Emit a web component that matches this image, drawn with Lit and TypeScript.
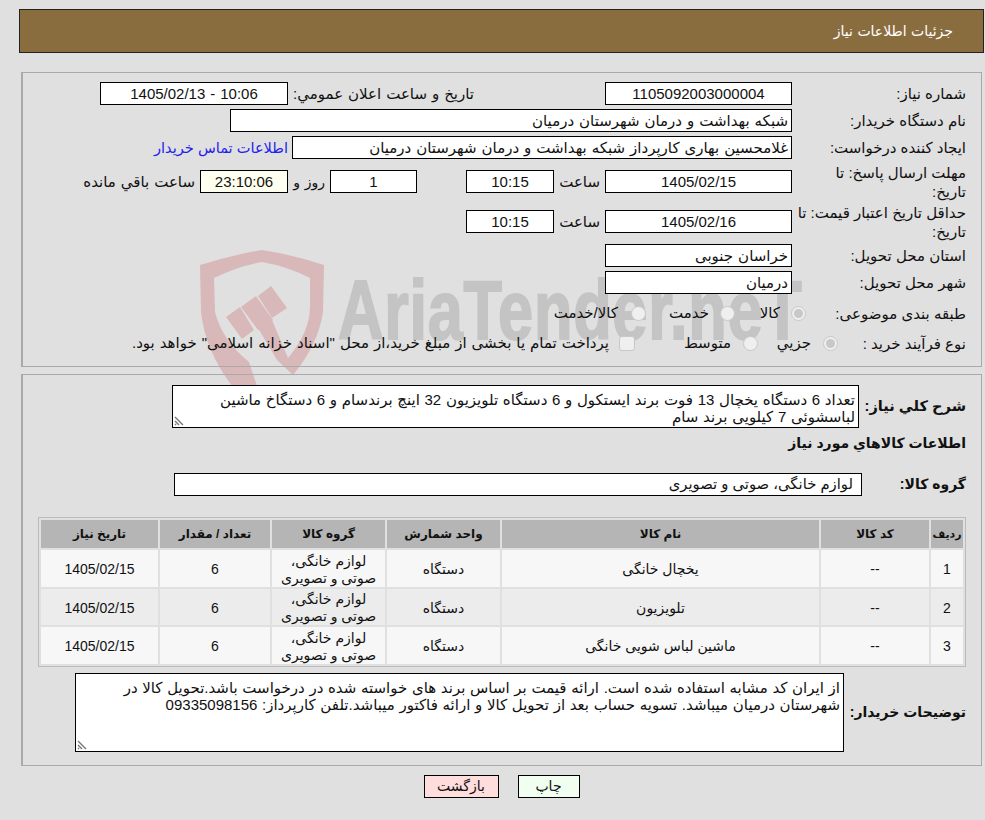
import { LitElement, html, css, svg } from "lit";
import { customElement } from "lit/decorators.js";

const rows = [
  { n: "1", name: "یخچال خانگی", h: "r37" },
  { n: "2", name: "تلویزیون", h: "r36" },
  { n: "3", name: "ماشین لباس شویی خانگی", h: "r37" },
];

const grip = svg`<svg class="grip" width="10" height="10" viewBox="0 0 10 10"><path d="M1 1l8 8M1 5l4 4M1 8l1 1" stroke="#777" stroke-width="1.4" fill="none"/></svg>`;

@customElement("app-root")
export class AppRoot extends LitElement {
  static styles = css`
    :host { display: block; width: 985px; height: 820px; background: #e0e0e0; position: relative; overflow: hidden;
      font-family: "Liberation Sans", "DejaVu Sans", sans-serif; font-size: 15px; color: #111; }
    .page { position: relative; direction: rtl; padding: 9px 1px 0 0; display: flex; flex-direction: column; }
    .mark { position: absolute; left: 0; top: 0; }
    .brand { position: absolute; left: 338px; top: 260px; font: bold 84px "Liberation Sans", sans-serif; color: #c4c4c4; -webkit-text-stroke: 2px #c4c4c4; direction: ltr; white-space: nowrap; transform-origin: 0 0; transform: scaleX(.75); letter-spacing: 1px; line-height: 100px; }
    .head { margin-left: 19px; height: 42px; border: 1px solid #222; background: #8a6d3f; color: #fff; font-size: 14px; font-family: "DejaVu Sans", sans-serif; display: flex; align-items: center; padding-right: 30px; }
    .panel { margin: 0 2px 0 21px; border: 1px solid #aaa; border-left-width: 2px; position: relative; }
    .p1 { margin-top: 19px; height: 284px; padding-top: 9px; display: flex; flex-direction: column; }
    .p2 { margin-top: 7px; height: 380px; padding-top: 10px; display: flex; flex-direction: column; }
    .row { display: flex; align-items: center; height: 23px; margin-bottom: 4px; flex: none; white-space: nowrap; }
    .lab { width: 174px; padding-right: 15px; line-height: 19px; flex: none; white-space: nowrap; }
    .f { height: 23px; box-sizing: border-box; border: 1px solid #000; background: #fff; text-align: center; line-height: 21px; flex: none; white-space: nowrap; overflow: hidden; word-spacing: .8px; }
    .w187 { width: 187px; } .w188 { width: 188px; } .w88 { width: 88px; } .w87 { width: 87px; }
    .start { text-align: right; padding-right: 3px; }
    .yellow { background: #fffff0; }
    .gap5 { margin-right: 5px; }
    .pad5 { padding-right: 5px; box-sizing: border-box; flex: none; word-spacing: .8px; }
    .sm { font-size: 14px; }
    .link { color: #2222ee; margin-right: 4px; font-size: 14.6px; }
    .r3 { margin-bottom: 11px; }
    .r4 { margin-bottom: 17px; }
    .r5 { margin-bottom: 11px; }
    .opt { height: 30px; margin: 0; }
    .rd { width: 15px; height: 15px; border-radius: 50%; border: 1px solid #c8c8c8; background: #efefef; box-sizing: border-box; flex: none; display: flex; align-items: center; justify-content: center; }
    .rd i { width: 9px; height: 9px; border-radius: 50%; background: #c8c8c8; display: none; }
    .rd.on i { display: block; }
    .ck { width: 16px; height: 15px; border-radius: 3px; border: 1px solid #c8c8c8; background: #efefef; box-sizing: border-box; flex: none; }
    .o { flex: none; word-spacing: .8px; }
    .b { font-weight: bold; font-size: 14px; }
    .b.big { font-size: 14.6px; }
    .ta { border: 1px solid #000; background: #fff; box-sizing: border-box; position: relative; line-height: 17px; padding: 5px 3px 0; flex: none; word-spacing: .5px; }
    .grip { position: absolute; left: 1px; bottom: 1px; }
    .desc { display: flex; align-items: center; }
    .desc .lab { width: 103px; margin-left: 4px; }
    .title { padding-right: 15px; margin: 4px 0 0; line-height: 22px; }
    .grp { display: flex; align-items: center; margin-top: 19px; }
    .grp .lab { width: 104px; }
    .grp .f { word-spacing: 0; font-size: 14.8px; }
    table { border: 1px solid #bbb; border-spacing: 2px; margin: 21px 15px 0 0; width: 928px; table-layout: fixed; border-collapse: separate; text-align: center; flex: none; }
    th { background: #b5b5b5; height: 28px; padding: 0; font-size: 12px; font-weight: bold; }
    th:first-child { font-size: 11px; }
    td { padding: 2px 0 0; line-height: 17px; font-size: 14px; box-sizing: border-box; }
    tr.r37 td { height: 37px; } tr.r36 td { height: 36px; }
    tr.a td { background: #f7f7f7; } tr.c td { background: #ececec; }
    .desc2 { margin-top: 6px; }
    .desc2 .lab { width: 118px; }
    .btns { display: flex; justify-content: center; margin-top: 9px; gap: 19px; padding-left: 19px; }
    .btn { height: 23px; box-sizing: border-box; border: 1px solid #000; line-height: 21px; text-align: center; font-size: 14px; }
    .print { width: 62px; background: #f0fff0; }
    .back { width: 75px; background: #ffdddd; }
  `;

  render() {
    return html`
      <svg class="mark" width="985" height="420" viewBox="0 0 985 420">
        <path fill="#d9b8ba" d="M200 265 Q232 255 262 250 Q294 255 324 265 L323 312 Q318 345 293 375 L277 360 L258 328 L272 320 L288 358 Q310 332 310 306 L310 278 Q286 266 262 262 Q238 266 214 278 L215 312 Q222 340 249 362 L257 386 L232 386 Q205 350 201 312 Z"/>
        <path fill="#d9b8ba" d="M226 317 240 307 254 330 242 339ZM241 307 256 296 273 320 258 330ZM258 296 271 286 287 308 272 318Z"/>
      </svg>
      <div class="brand" aria-hidden="true">AriaTender.neT</div>
      <div class="page">
        <div class="head">جزئیات اطلاعات نیاز</div>
        <section class="panel p1">
          <div class="row">
            <div class="lab">شماره نیاز:</div>
            <div class="f w187">1105092003000004</div>
            <div class="o" style="width:131px"></div>
            <div class="o" style="width:181px">تاریخ و ساعت اعلان عمومي:</div>
            <div class="f w188 gap5">10:06 - 1405/02/13</div>
          </div>
          <div class="row">
            <div class="lab">نام دستگاه خریدار:</div>
            <div class="f start" style="width:562px">شبکه بهداشت و درمان شهرستان درمیان</div>
          </div>
          <div class="row r3">
            <div class="lab">ایجاد کننده درخواست:</div>
            <div class="f start" style="width:500px">غلامحسین بهاری کارپرداز شبکه بهداشت و درمان شهرستان درمیان</div>
            <div class="link">اطلاعات تماس خریدار</div>
          </div>
          <div class="row r4">
            <div class="lab">مهلت ارسال پاسخ: تا<br>تاریخ:</div>
            <div class="f w187">1405/02/15</div>
            <div class="pad5" style="width:51px">ساعت</div>
            <div class="f w88">10:15</div>
            <div class="o" style="width:49px"></div>
            <div class="f w87">1</div>
            <div class="pad5 sm" style="width:42px">روز و</div>
            <div class="f w88 yellow">23:10:06</div>
            <div class="pad5">ساعت باقي مانده</div>
          </div>
          <div class="row r5">
            <div class="lab">حداقل تاریخ اعتبار قیمت: تا<br>تاریخ:</div>
            <div class="f w187">1405/02/16</div>
            <div class="pad5" style="width:51px">ساعت</div>
            <div class="f w88">10:15</div>
          </div>
          <div class="row">
            <div class="lab">استان محل تحویل:</div>
            <div class="f start w187">خراسان جنوبی</div>
          </div>
          <div class="row">
            <div class="lab">شهر محل تحویل:</div>
            <div class="f start w187">درمیان</div>
          </div>
          <div class="row opt">
            <div class="lab" style="width:160px">طبقه بندی موضوعی:</div>
            <span class="rd on"><i></i></span>
            <span class="o" style="margin-right:11px;width:45px">کالا</span>
            <span class="rd"><i></i></span>
            <span class="o" style="margin-right:11px;width:63px">خدمت</span>
            <span class="rd"><i></i></span>
            <span class="o" style="margin-right:13px">کالا/خدمت</span>
          </div>
          <div class="row opt">
            <div class="lab" style="width:128px">نوع فرآیند خرید :</div>
            <span class="rd on"><i></i></span>
            <span class="o" style="margin-right:12px;width:53px">جزيي</span>
            <span class="rd"><i></i></span>
            <span class="o" style="margin-right:12px;width:96px">متوسط</span>
            <span class="ck"></span>
            <span class="o" style="margin-right:10px">پرداخت تمام یا بخشی از مبلغ خرید،از محل "اسناد خزانه اسلامی" خواهد بود.</span>
          </div>
        </section>
        <section class="panel p2">
          <div class="desc">
            <div class="lab b big">شرح کلي نیاز:</div>
            <div class="ta" style="width:687px;height:43px;">تعداد 6 دستگاه یخچال 13 فوت برند ایستکول و 6 دستگاه تلویزیون 32 اینچ برندسام و 6 دستگاخ ماشین<br>لباسشوئی 7 کیلویی برند سام${grip}</div>
          </div>
          <div class="title b">اطلاعات کالاهاي مورد نیاز</div>
          <div class="grp">
            <div class="lab b">گروه کالا:</div>
            <div class="f start" style="width:688px;padding-right:8px;">لوازم خانگی، صوتی و تصویری</div>
          </div>
          <table>
            <colgroup><col style="width:32px"><col style="width:108px"><col style="width:317px"><col style="width:113px"><col style="width:113px"><col style="width:110px"><col style="width:117px"></colgroup>
            <thead><tr><th>ردیف</th><th>کد کالا</th><th>نام کالا</th><th>واحد شمارش</th><th>گروه کالا</th><th>تعداد / مقدار</th><th>تاریخ نیاز</th></tr></thead>
            <tbody>
              ${rows.map((r, i) => html`<tr class="${i % 2 ? "c" : "a"} ${r.h}">
                <td>${r.n}</td><td>--</td><td>${r.name}</td><td>دستگاه</td><td>لوازم خانگی،<br>صوتی و تصویری</td><td>6</td><td>1405/02/15</td>
              </tr>`)}
            </tbody>
          </table>
          <div class="desc desc2">
            <div class="lab b">توضیحات خریدار:</div>
            <div class="ta" style="width:769px;height:79px;">از ایران کد مشابه استفاده شده است. ارائه قیمت بر اساس برند های خواسته شده در درخواست باشد.تحویل کالا در<br>شهرستان درمیان میباشد. تسویه حساب بعد از تحویل کالا و ارائه فاکتور میباشد.تلفن کارپرداز: 09335098156${grip}</div>
          </div>
        </section>
        <div class="btns">
          <div class="btn print">چاپ</div>
          <div class="btn back">بازگشت</div>
        </div>
      </div>
    `;
  }
}
